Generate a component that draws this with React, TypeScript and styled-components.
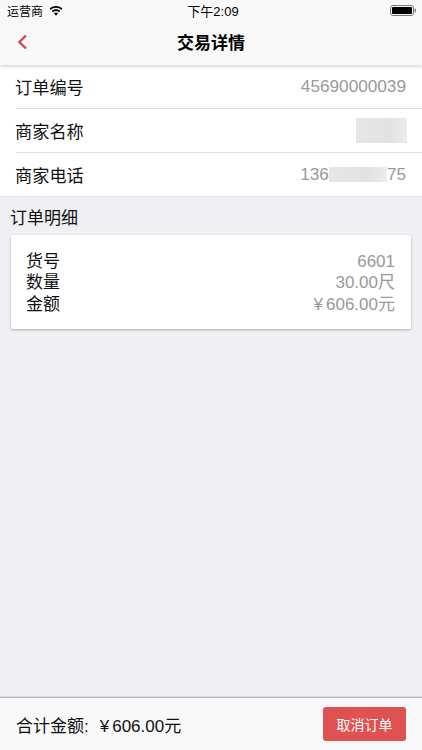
import React from 'react';
import styled, { createGlobalStyle } from 'styled-components';

const Global = createGlobalStyle`
html, body {
  margin: 0;
  padding: 0;
}
body {
  font-family: "Liberation Sans", "Noto Sans CJK SC", sans-serif;
  background: #efeff4;
}
`
const Page = styled.div`
display: flex;
flex-direction: column;
width: 422px;
height: 750px;
overflow: hidden;
background: #efeff4;
`
const Header = styled.header`
background: #f8f8f8;
box-shadow: 0 1px 4px rgba(0,0,0,0.22);
height: 65px;
flex-shrink: 0;
position: relative;
z-index: 1;
`
const StatusBar = styled.div`
display: grid;
grid-template-columns: 1fr auto 1fr;
align-items: center;
height: 21px;
padding: 0 3px 0 7px;
font-size: 12px;
color: #000;
`
const StatusLeft = styled.div`
display: flex;
align-items: center;
gap: 6px;
`
const StatusTime = styled.span`
font-size: 13px;
`
const StatusRight = styled.div`
display: flex;
justify-content: flex-end;
padding-right: 3px;
`
const NavBar = styled.div`
display: grid;
grid-template-columns: 1fr auto 1fr;
align-items: center;
height: 41px;
padding: 0 17px;
`
const NavTitle = styled.div`
font-size: 17px;
font-weight: 700;
color: #000;
`
const Info = styled.section`
background: #fff;
border-bottom: 1px solid #e2e2e4;
`
const Row = styled.div<{ $last?: boolean }>`
display: flex;
justify-content: space-between;
align-items: center;
height: 43px;
margin-left: 16px;
padding-right: 16px;
border-bottom: ${p => (p.$last ? 'none' : '1px solid #e0e0e0')};
`
const Label = styled.span`
margin-left: -1px;
font-size: 17.2px;
color: #111;
`
const Value = styled.span`
display: flex;
align-items: center;
font-size: 17.2px;
color: #999;
`
const Blur = styled.span<{ $w: number; $h: number; $end?: boolean }>`
display: block;
width: ${p => p.$w}px;
height: ${p => p.$h}px;
margin-right: ${p => (p.$end ? '-1px' : '0')};
background: linear-gradient(90deg, #e6e6e6, #e2e2e2 70%, #ececec);
`
const SectionTitle = styled.h2`
margin: 0;
height: 37.5px;
line-height: 44px;
padding-left: 10px;
font-size: 17px;
font-weight: 400;
color: #111;
`
const Card = styled.div`
display: flex;
flex-direction: column;
margin: 0 11px;
padding: 16px 16px 14px 15px;
background: #fff;
border-radius: 2px;
box-shadow: 0 1px 3px rgba(0,0,0,0.28);
`
const CardRow = styled.div`
display: flex;
justify-content: space-between;
height: 21.5px;
line-height: 21.5px;
font-size: 17px;
`
const CardLabel = styled.span`
color: #111;
`
const CardValue = styled.span`
color: #999;
`
const Yen = styled.span`
margin-right: 3px;
`
const Spacer = styled.div`
flex: 1;
`
const Footer = styled.footer`
display: flex;
justify-content: space-between;
align-items: center;
height: 52px;
flex-shrink: 0;
padding: 0 16px;
background: #f8f8f8;
border-top: 1px solid #b0b0b8;
box-shadow: 0 -1px 1px rgba(0,0,0,0.08);
`
const Total = styled.span`
font-size: 17px;
color: #111;
`
const TotalColon = styled.span`
margin-right: 11px;
`
const CancelBtn = styled.button`
width: 83px;
height: 34px;
padding: 0;
border: none;
border-radius: 3px;
background: #e05252;
color: #fff;
font-family: inherit;
font-size: 14px;
`

function Wifi() {
  return (
    <svg width="14" height="10" viewBox="0 0 15 11" fill="#000">
      <path d="M7.5 0C4.7 0 2.2 1.1.3 2.9l1.2 1.3C3.1 2.7 5.2 1.8 7.5 1.8s4.4.9 6 2.4l1.2-1.3C12.8 1.1 10.3 0 7.5 0z" />
      <path d="M7.5 3.7c-1.8 0-3.4.7-4.6 1.8l1.3 1.3c.9-.8 2-1.3 3.3-1.3s2.4.5 3.3 1.3l1.3-1.3C10.9 4.4 9.3 3.7 7.5 3.7z" />
      <path d="M7.5 7.2c-.9 0-1.7.3-2.3.9l2.3 2.6 2.3-2.6c-.6-.6-1.4-.9-2.3-.9z" />
    </svg>
  );
}

function Battery() {
  return (
    <svg width="26" height="11" viewBox="0 0 26 11">
      <rect x="0.5" y="0.5" width="23" height="10" rx="2.5" fill="none" stroke="#777" />
      <rect x="2" y="2" width="20" height="7" rx="1" fill="#000" />
      <rect x="24.5" y="3.5" width="1.5" height="4" rx="0.7" fill="#888" />
    </svg>
  );
}

function BackArrow() {
  return (
    <svg width="11" height="16" viewBox="0 0 11 16" fill="none" stroke="#d0484a" strokeWidth="2.4">
      <path d="M9 1.5 2.4 8 9 14.5" />
    </svg>
  );
}

export default function App() {
  return (
    <Page>
      <Global />
      <Header>
        <StatusBar>
          <StatusLeft>
            运营商
            <Wifi />
          </StatusLeft>
          <StatusTime>下午2:09</StatusTime>
          <StatusRight>
            <Battery />
          </StatusRight>
        </StatusBar>
        <NavBar>
          <BackArrow />
          <NavTitle>交易详情</NavTitle>
        </NavBar>
      </Header>
      <Info>
        <Row>
          <Label>订单编号</Label>
          <Value>45690000039</Value>
        </Row>
        <Row>
          <Label>商家名称</Label>
          <Value><Blur $w={51} $h={25} $end /></Value>
        </Row>
        <Row $last>
          <Label>商家电话</Label>
          <Value>136<Blur $w={58} $h={15} />75</Value>
        </Row>
      </Info>
      <SectionTitle>订单明细</SectionTitle>
      <Card>
        <CardRow><CardLabel>货号</CardLabel><CardValue>6601</CardValue></CardRow>
        <CardRow><CardLabel>数量</CardLabel><CardValue>30.00尺</CardValue></CardRow>
        <CardRow><CardLabel>金额</CardLabel><CardValue><Yen>¥</Yen>606.00元</CardValue></CardRow>
      </Card>
      <Spacer />
      <Footer>
        <Total>合计金额<TotalColon>:</TotalColon><Yen>¥</Yen>606.00元</Total>
        <CancelBtn>取消订单</CancelBtn>
      </Footer>
    </Page>
  );
}
